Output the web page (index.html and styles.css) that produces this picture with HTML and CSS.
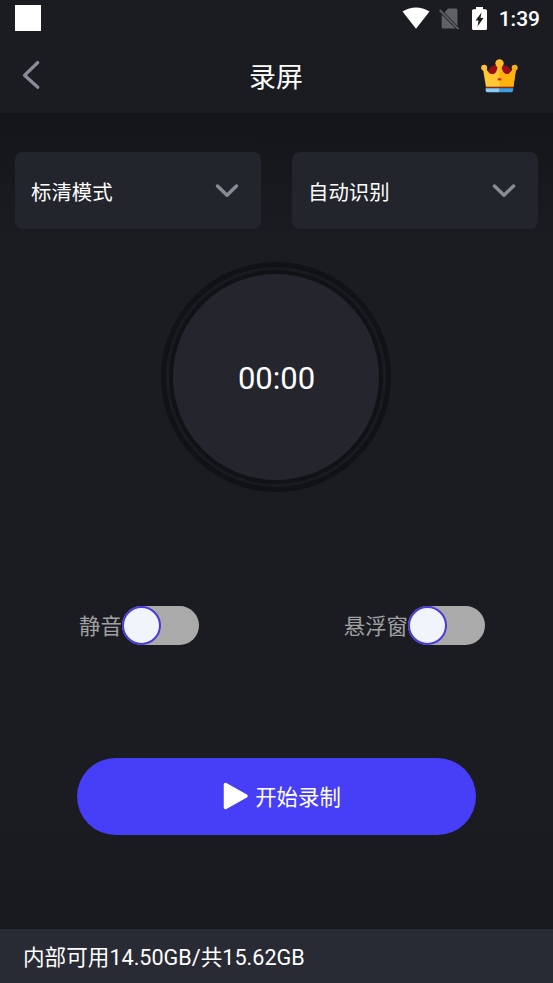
FILE: index.html
```html
<!DOCTYPE html>
<html lang="zh-CN">

<head>
    <meta charset="UTF-8">
    <meta name="viewport" content="width=device-width, initial-scale=1.0">
    <title>录屏</title>
    <link rel="stylesheet" href="styles.css">
</head>

<body>
    <header class="header">
        <div class="status-bar">
            <span class="notification"></span>
            <div class="status-icons">
                <svg class="wifi" width="28" height="22" viewBox="0 0 28 22">
                    <path d="M0.5 4.600Q14-3.800 27.500 4.600L14 21.800Z" fill="#fff" />
                </svg>
                <svg class="no-sim" width="20" height="22" viewBox="0 0 20 22">
                    <path d="M9 .5h8q1.500 0 1.500 1.500V18L5.500 4.500ZM2.700 6.500 16.500 20.500H4q-1.300 0-1.300-1.300Z" fill="#606165" />
                    <path d="M.7 2 19.500 21.200" stroke="#606165" stroke-width="1.800" />
                </svg>
                <svg class="battery" width="15" height="23" viewBox="0 0 15 23">
                    <path d="M4 0h7v2.300h2.500Q15 2.300 15 3.800v17.700Q15 23 13.500 23h-12Q0 23 0 21.500V3.800Q0 2.300 1.500 2.300H4Z" fill="#fff" />
                    <path d="M9.500 5.500 8.500 11h3L5.500 19.500l1-6h-3Z" fill="#1b1c22" />
                </svg>
                <span class="clock">1:39</span>
            </div>
        </div>
        <div class="nav-bar">
            <svg class="back" width="20" height="32" viewBox="0 0 20 32">
                <path d="M16.800 3.500 3.500 16.300l13.300 11.900" />
            </svg>
            <h1 class="title">录屏</h1>
            <svg class="crown" width="37" height="34" viewBox="0 0 111 102">
                <path d="M18 46Q22 24 42 18h28Q90 24 94 46L70 56H38Z" fill="#980f12" />
                <path d="M6 30 14 25Q22 46 35 46 49 44 50 18h11Q62 44 77 46 89 46 97 25l8 5-8 54H15Z" fill="#ffc934" />
                <path d="M55.500 18H61Q62 44 77 46 89 46 97 25l8 5-8 54H55.500Z" fill="#ffb20a" />
                <circle cx="55.500" cy="13" r="12.500" fill="#ffc02b" />
                <circle cx="9.500" cy="26" r="9" fill="#ffc33a" />
                <circle cx="101" cy="26" r="9" fill="#f9ab1b" />
                <path d="M50 58h11v6H50Z" fill="#d31e0c" />
                <path d="M14 83h83v5H14Z" fill="#8d2b12" />
                <path d="M14 88h42v12H20q-5 0-6-5Z" fill="#8accf5" />
                <path d="M55.500 88H97l-1 7q-1 5-6 5H55.500Z" fill="#3e9fe0" />
            </svg>
        </div>
    </header>

    <main class="content">
        <div class="selects">
            <div class="select">
                <span>标清模式</span>
                <svg class="arrow" width="24" height="16" viewBox="0 0 24 16">
                    <path d="M2.500 3 12 12.200 21.500 3" />
                </svg>
            </div>
            <div class="select">
                <span>自动识别</span>
                <svg class="arrow" width="24" height="16" viewBox="0 0 24 16">
                    <path d="M2.500 3 12 12.200 21.500 3" />
                </svg>
            </div>
        </div>

        <div class="timer">
            <div class="timer-ring">
                <div class="timer-face">00:00</div>
            </div>
        </div>

        <div class="switches">
            <div class="switch-item">
                <span>静音</span>
                <div class="switch"><span class="knob"></span></div>
            </div>
            <div class="switch-item">
                <span>悬浮窗</span>
                <div class="switch"><span class="knob"></span></div>
            </div>
        </div>

        <button class="start-button">
            <svg width="26" height="28" viewBox="0 0 26 28">
                <path d="M2.500 2.500 23 14 2.500 25.500Z" fill="#fff" stroke="#fff" stroke-width="3.500" stroke-linejoin="round" />
            </svg>
            <span>开始录制</span>
        </button>
    </main>

    <footer class="storage">内部可用14.50GB/共15.62GB</footer>
</body>

</html>
```
FILE: styles.css
```css
* {
    box-sizing: border-box;
}

body {
    display: flex;
    flex-direction: column;
    height: 983px;
    margin: 0;
    background-color: #1b1c21;
    color: #fff;
    font-family: Roboto, "Noto Sans CJK SC", sans-serif;
}

svg {
    display: block;
    flex-shrink: 0;
}

.header {
    height: 113px;
    background-color: #1b1c22;
}

.status-bar {
    display: flex;
    justify-content: space-between;
    height: 37px;
    padding: 5px 13px 0 15px;
}

.notification {
    width: 26px;
    height: 26px;
    background-color: #fff;
}

.status-icons {
    display: flex;
    align-items: center;
    height: 27px;
}

.wifi {
    margin-bottom: 1px;
}

.no-sim {
    margin-left: 9px;
}

.battery {
    margin-left: 13px;
}

.clock {
    margin-left: 12px;
    padding-top: 2px;
    font-size: 21px;
    font-weight: 500;
    line-height: 27px;
}

.nav-bar {
    display: grid;
    grid-template-columns: 60px 1fr 60px;
    align-items: center;
    height: 76px;
    padding: 0 35px 0 21px;
}

.back path,
.arrow path {
    fill: none;
    stroke: #8b8c98;
    stroke-width: 3.2;
    stroke-linecap: round;
    stroke-linejoin: round;
}

.title {
    margin: 0 0 0 13px;
    padding-top: 5px;
    font-size: 27px;
    font-weight: 400;
    line-height: 40px;
    text-align: center;
}

.crown {
    justify-self: end;
    margin-top: 1px;
}

.content {
    display: flex;
    flex: 1;
    flex-direction: column;
    align-items: center;
    padding-top: 39px;
    background: linear-gradient(#131519, #1b1c21 130px, #1b1c21 700px, #18191d);
}

.selects {
    display: grid;
    grid-template-columns: 1fr 1fr;
    gap: 31px;
    width: 100%;
    padding: 0 15px;
}

.select {
    display: flex;
    justify-content: space-between;
    align-items: center;
    height: 77px;
    padding: 0 22.5px 0 16px;
    border-radius: 8px;
    background-color: #22252c;
    font-size: 20.4px;
}

.arrow path {
    stroke: #888b94;
    stroke-width: 3.5;
}

.timer {
    width: 230px;
    height: 230px;
    margin-top: 33px;
    margin-right: 1px;
    padding: 3px;
    border: 5px solid #111216;
    border-radius: 50%;
    background-color: #1a1b20;
}

.timer-ring {
    height: 100%;
    border: 4px solid #111216;
    border-radius: 50%;
}

.timer-face {
    display: flex;
    justify-content: center;
    align-items: center;
    height: 100%;
    padding: 2px 0 0 1px;
    border-radius: 50%;
    background-color: #25252d;
    font-size: 31px;
}

.switches {
    display: flex;
    justify-content: space-between;
    width: 100%;
    margin-top: 114px;
    padding: 0 68px 0 79px;
}

.switch-item {
    display: flex;
    align-items: center;
    color: #a0a0a3;
    font-size: 21.4px;
}

.switch-item > span {
    padding-bottom: 2px;
}

.switch {
    width: 77px;
    height: 39px;
    border-radius: 20px;
    background-color: #aaa;
}

.knob {
    display: block;
    width: 39px;
    height: 39px;
    border: 2px solid #473cdb;
    border-radius: 50%;
    background-color: #f1f5fb;
}

.start-button {
    display: flex;
    justify-content: center;
    align-items: center;
    gap: 6px;
    width: 399px;
    height: 77px;
    margin-top: 113px;
    padding: 0 0 2px 11px;
    border: none;
    border-radius: 39px;
    background-color: #473ef8;
    color: #fff;
    font-family: inherit;
    font-size: 21.4px;
    cursor: pointer;
}

.storage {
    height: 54px;
    padding-left: 23px;
    background-color: #292b34;
    font-size: 21.6px;
    line-height: 57px;
}
```
